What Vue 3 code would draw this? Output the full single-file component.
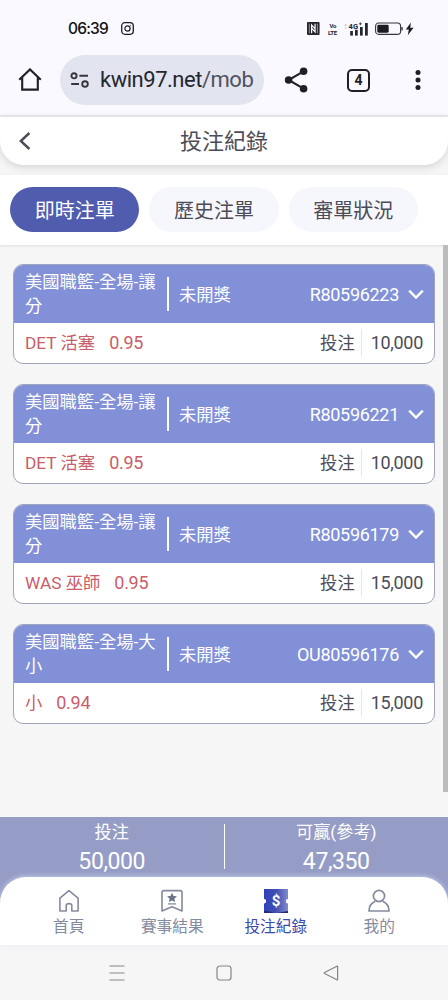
<script setup>
import { ref } from 'vue'

const tabs = ['即時注單', '歷史注單', '審單狀況']
const activeTab = ref(0)

const bets = ref([
  { id: 'R80596223', title: '美國職籃-全場-讓分', team: 'DET 活塞', odds: '0.95', amount: '10,000' },
  { id: 'R80596221', title: '美國職籃-全場-讓分', team: 'DET 活塞', odds: '0.95', amount: '10,000' },
  { id: 'R80596179', title: '美國職籃-全場-讓分', team: 'WAS 巫師', odds: '0.95', amount: '15,000' },
  { id: 'OU80596176', title: '美國職籃-全場-大小', team: '小', odds: '0.94', amount: '15,000' },
])
</script>

<template>
  <div class="phone">
    <div class="status">
      <span class="time">06:39</span>
      <svg class="insta" width="13" height="13" viewBox="0 0 13 13" fill="none" stroke="#1d1d24">
        <rect x=".7" y=".7" width="11.6" height="11.6" rx="3.2" stroke-width="1.3" />
        <circle cx="6.5" cy="6.5" r="2.6" stroke-width="1.2" />
        <circle cx="9.7" cy="3.3" r=".5" fill="#1d1d24" stroke="none" />
      </svg>
      <div class="statusIcons">
        <svg class="nfc" width="13" height="13" viewBox="0 0 13 13">
          <rect width="12.6" height="13" rx="1" fill="#26262c" />
          <path d="M4.6 11.2V3L7.9 6.6M8.1 1.8V10L4.8 6.4" fill="none" stroke="#faf9ff" stroke-width="1.2" />
          <path d="M2.3 1.6V11.4M10.4 1.6V11.4" fill="none" stroke="#faf9ff" stroke-width=".5" />
        </svg>
        <svg class="volte" width="10" height="16" viewBox="0 0 10 16" fill="#26262c">
          <text x="1.4" y="6.6">Vo</text>
          <text x="0" y="14">LTE</text>
        </svg>
        <svg class="signal" width="25" height="14" viewBox="0 0 25 14" fill="#26262c">
          <path d="M0 4L1.7 1.8L3.4 4ZM0 5.4H3.4L1.7 7Z" fill="#cfced6" />
          <text x="4.6" y="6.6">4G</text>
          <path d="M15 1.8h2.8M16.4 .4v2.8" stroke="#26262c" stroke-width=".8" />
          <rect x="6.2" y="9" width="2.7" height="4.6" />
          <rect x="11" y="7.8" width="2.7" height="5.8" />
          <rect x="16" y="5" width="2.7" height="8.6" />
          <rect x="21" y="1" width="2.8" height="12.6" />
        </svg>
        <svg class="battery" width="40" height="14" viewBox="0 0 40 14">
          <rect x=".6" y="1" width="25" height="11.4" rx="3.2" fill="none" stroke="#36363c" stroke-width="1.1" />
          <rect x="2.3" y="2.7" width="11.4" height="8" rx="1.4" fill="#1c1c22" />
          <path d="M27 5v3.6" stroke="#36363c" stroke-width="1.4" />
          <path d="M36 .4L30.8 7.6H33.8L32.8 13.2L38.6 5.8H35.2Z" fill="#1c1c22" />
        </svg>
      </div>
    </div>

    <div class="browser">
      <svg class="home" width="24" height="24" viewBox="0 0 24 24" fill="none" stroke="#202026" stroke-width="2.1">
        <path d="M1.2 11.8L12 1.4L22.8 11.8M4.2 9.4V21.6H19.8V9.4" />
      </svg>
      <div class="address">
        <svg width="20" height="16" viewBox="0 0 20 16" fill="none" stroke="#34353d" stroke-width="1.9">
          <circle cx="4" cy="3.8" r="2.6" />
          <path d="M9.4 3.8H18M1.2 12H9" />
          <circle cx="15" cy="12" r="2.8" />
        </svg>
        <span class="url">kwin97.net<i>/mob</i></span>
      </div>
      <svg class="share" width="24" height="26" viewBox="0 0 24 26" fill="#1f1f26">
        <path d="M19.6 4.3L4.6 13L19.6 21.7" fill="none" stroke="#1f1f26" stroke-width="2.1" />
        <circle cx="4.6" cy="13" r="3.8" />
        <circle cx="19.6" cy="4.3" r="3.8" />
        <circle cx="19.6" cy="21.7" r="3.8" />
      </svg>
      <span class="tabCount">4</span>
      <svg class="dots" width="6" height="20" viewBox="0 0 6 20" fill="#1f1f26">
        <circle cx="3" cy="2.6" r="2.5" />
        <circle cx="3" cy="10" r="2.5" />
        <circle cx="3" cy="17.4" r="2.5" />
      </svg>
    </div>

    <header>
      <svg width="12" height="18" viewBox="0 0 12 18" fill="none" stroke="#4c4c58" stroke-width="2.4">
        <path d="M10.4 1L1.8 9L10.4 17" />
      </svg>
      <h1>投注紀錄</h1>
    </header>

    <nav class="tabs">
      <button
        v-for="(tab, index) in tabs"
        :key="tab"
        :class="{ active: index === activeTab }"
        @click="activeTab = index"
      >{{ tab }}</button>
    </nav>

    <main>
      <section class="list">
        <article v-for="bet in bets" :key="bet.id" class="card">
          <div class="cardTop">
            <p class="title">{{ bet.title }}</p>
            <span class="state">未開獎</span>
            <span class="number">{{ bet.id }}</span>
            <svg width="16" height="11" viewBox="0 0 16 11" fill="none" stroke="#fff" stroke-width="2.3">
              <path d="M1.2 1.6L8 8.6L14.8 1.6" />
            </svg>
          </div>
          <div class="cardBottom">
            <span class="team">{{ bet.team }}</span>
            <span class="odds">{{ bet.odds }}</span>
            <span class="label">投注</span>
            <span class="amount">{{ bet.amount }}</span>
          </div>
        </article>
      </section>
      <div class="scrollbar"></div>
    </main>

    <section class="summary">
      <div class="total">
        <p>投注</p>
        <strong>50,000</strong>
      </div>
      <div class="total">
        <p>可贏(參考)</p>
        <strong>47,350</strong>
      </div>
    </section>

    <footer>
      <a>
        <svg width="24" height="24" viewBox="0 0 24 24" fill="none" stroke="#858b9f" stroke-width="1.6" stroke-linejoin="round">
          <path d="M2.9 9.2L12 1.6L21.1 9.2V22H14.8V16.4Q14.8 14.6 12 14.6Q9.2 14.6 9.2 16.4V22H2.9Z" />
        </svg>
        <span>首頁</span>
      </a>
      <a>
        <svg width="24" height="24" viewBox="0 0 24 24" fill="none" stroke="#858b9f" stroke-width="1.6" stroke-linejoin="round">
          <path d="M3.8 1.6H20.2Q22 1.6 22 3.4V22L12 17.8L2 22V3.4Q2 1.6 3.8 1.6Z" />
          <path d="M12 3.8l1.5 3.1 3.4.4-2.5 2.4.7 3.4-3.1-1.6-3.1 1.6.7-3.4-2.5-2.4 3.4-.4z" fill="#6c7389" stroke="none" />
          <path d="M8 14.9H16" stroke-width="1.3" />
        </svg>
        <span>賽事結果</span>
      </a>
      <a class="current">
        <svg width="24" height="24" viewBox="0 0 24 24">
          <defs>
            <linearGradient id="ticket" x1="0" y1="0" x2="1" y2="0">
              <stop offset="0" stop-color="#2f43ba" />
              <stop offset=".5" stop-color="#424fb2" />
              <stop offset="1" stop-color="#8189cd" />
            </linearGradient>
          </defs>
          <path d="M0 0H24V10A2.2 2.2 0 0 0 24 14.4V24H0V14.4A2.2 2.2 0 0 0 0 10Z" fill="url(#ticket)" />
          <path d="M0 24V21.4Q6 22 10 24ZM24 24V22L13 24Z" fill="#242b72" />
          <text x="12" y="17.2" text-anchor="middle">$</text>
        </svg>
        <span>投注紀錄</span>
      </a>
      <a>
        <svg width="24" height="24" viewBox="0 0 24 24" fill="none" stroke="#858b9f" stroke-width="1.7" stroke-linejoin="round">
          <circle cx="12" cy="7" r="5.6" />
          <path d="M8.4 12.3Q2 15 2 22H22Q22 15 15.6 12.3" />
        </svg>
        <span>我的</span>
      </a>
    </footer>

    <div class="system">
      <svg width="16" height="16" viewBox="0 0 16 16" fill="none" stroke="#85858a" stroke-width="1.2">
        <path d="M.5 1H15.5M.5 8H15.5M.5 15H15.5" />
      </svg>
      <svg width="16" height="16" viewBox="0 0 16 16" fill="none" stroke="#85858a" stroke-width="1.2">
        <rect x="1" y="1" width="14" height="14" rx="2.8" />
      </svg>
      <svg width="16" height="16" viewBox="0 0 16 16" fill="none" stroke="#85858a" stroke-width="1.2" stroke-linejoin="round">
        <path d="M14.6 1.6V14.4Q14.6 15.2 13.8 14.8L1.6 8.5Q.8 8 1.6 7.5L13.8 1.2Q14.6.8 14.6 1.6Z" />
      </svg>
    </div>
  </div>
</template>

<style>
body {
  margin: 0;
}
</style>

<style scoped>
.phone {
  display: flex;
  flex-direction: column;
  width: 448px;
  height: 1000px;
  overflow: hidden;
  background: #f6f6f7;
  color: #4c4c58;
  font-family: Roboto, "Noto Sans CJK TC", sans-serif;
}
.phone * {
  box-sizing: border-box;
}
h1,
p {
  margin: 0;
  font-weight: 400;
}
svg {
  display: block;
  flex: none;
}

/* status bar */
.status {
  display: flex;
  align-items: center;
  flex: none;
  height: 46px;
  padding: 11px 33px 0 68px;
  background: #faf9ff;
}
.time {
  width: 40px;
  color: #111116;
  font: 500 15.5px/20px Inter, sans-serif;
  letter-spacing: -0.8px;
}
.insta {
  margin-left: 13px;
}
.statusIcons {
  display: flex;
  align-items: center;
  margin-left: auto;
}
.volte {
  margin: 0 6px 0 8px;
  overflow: visible;
}
.volte text {
  font: 700 6px Roboto, sans-serif;
  letter-spacing: -0.3px;
}
.signal text {
  font: 700 7.5px Roboto, sans-serif;
}
.battery {
  margin-left: 6px;
}

/* browser bar */
.browser {
  display: flex;
  align-items: center;
  flex: none;
  height: 71px;
  padding: 0 27px 1px 18px;
  border-bottom: 2px solid #eaeaf0;
  background: #faf9ff;
}
.address {
  display: flex;
  align-items: center;
  flex: none;
  width: 204px;
  height: 50px;
  margin: 0 20px 0 18px;
  padding-left: 10px;
  border-radius: 25px;
  background: #e2e4ef;
}
.url {
  margin-left: 10px;
  font-size: 22px;
  line-height: 28px;
  letter-spacing: -0.48px;
  color: #25262e;
}
.url i {
  font-style: normal;
  color: #50525e;
}
.tabCount {
  flex: none;
  width: 23px;
  height: 23px;
  margin-left: 39px;
  border: 2.4px solid #1f1f26;
  border-radius: 5px;
  font-size: 14px;
  font-weight: 700;
  line-height: 19px;
  text-align: center;
  color: #1f1f26;
}
.dots {
  margin-left: auto;
}

/* page title */
header {
  display: grid;
  grid-template-columns: 32px 1fr 32px;
  align-items: center;
  flex: none;
  height: 48px;
  padding: 0 19px;
  border-radius: 0 0 24px 24px;
  background: #fff;
  box-shadow: 0 2px 8px rgba(0, 0, 0, 0.14);
}
h1 {
  padding-top: 2px;
  font-size: 22px;
  line-height: 30px;
  text-align: center;
}

/* tabs */
.tabs {
  display: flex;
  gap: 10px;
  flex: none;
  height: 70px;
  margin-top: 10px;
  padding: 12px 10px;
  background: #fff;
  box-shadow: 0 1px 3px rgba(0, 0, 0, 0.09);
}
.tabs button {
  width: 129.3px;
  height: 45px;
  padding: 0;
  border: 0;
  border-radius: 23px;
  background: #f6f7fc;
  color: #4c4c58;
  font-family: inherit;
  font-size: 20px;
}
.tabs button.active {
  background: #505cae;
  color: #fff;
}

/* bet list */
main {
  display: flex;
  flex: none;
  height: 572px;
}
.list {
  display: flex;
  flex-direction: column;
  gap: 20px;
  flex: 1;
  padding: 19px 8px 0 13px;
}
.scrollbar {
  width: 5px;
  height: 547px;
  background: #bcbcbc;
}
.card {
  flex: none;
  height: 100px;
  border: 1.5px solid #a0a3bd;
  border-radius: 10px;
  background: #fff;
  overflow: hidden;
}
.cardTop {
  display: flex;
  align-items: center;
  height: 58px;
  padding: 0 10px 0 11px;
  background: #8190d7;
  color: #fff;
  font-size: 17.3px;
}
.title {
  display: flex;
  align-items: center;
  width: 144px;
  height: 34px;
  padding-right: 8px;
  border-right: 2.5px solid #fff;
  line-height: 24px;
}
.state {
  margin: -2px 0 0 10px;
}
.number {
  margin: 0 9px 0 auto;
  font-size: 18px;
  letter-spacing: -0.3px;
}
.cardBottom {
  display: flex;
  align-items: center;
  height: 40px;
  padding: 0 11px;
  font-size: 17.3px;
}
.team,
.odds {
  color: #ca5d6a;
}
.team,
.label {
  margin-top: -3px;
}
.odds {
  margin: -1px 0 0 14px;
}
.odds,
.amount {
  font-size: 18px;
  letter-spacing: -0.3px;
}
.label {
  margin-left: auto;
}
.amount {
  height: 28px;
  margin-left: 6px;
  padding-left: 9px;
  border-left: 1px solid #e6e6ec;
  line-height: 28px;
}

/* totals, the rounded footer overlaps the lower edge */
.summary {
  display: flex;
  flex: none;
  height: 90px;
  margin-bottom: -30px;
  padding-top: 7px;
  background: #959dc6;
  color: #fff;
}
.total {
  flex: 1;
  height: 45px;
  text-align: center;
}
.total:first-child {
  border-right: 1px solid #fff;
}
.total p {
  margin-top: -5px;
  font-size: 17.2px;
  line-height: 26px;
}
.total strong {
  display: block;
  font-size: 23px;
  font-weight: 400;
  line-height: 33px;
  letter-spacing: -0.4px;
}

/* bottom navigation */
footer {
  position: relative;
  display: flex;
  flex: none;
  height: 68px;
  padding: 12px 17px 0;
  border-radius: 26px 26px 0 0;
  background: #fff;
  box-shadow: 0 -1px 5px rgba(214, 218, 245, 0.7);
}
footer a {
  display: flex;
  flex-direction: column;
  align-items: center;
  flex: 1;
  color: #858b9f;
  font-size: 15.7px;
  line-height: 24px;
  white-space: nowrap;
}
footer a.current {
  color: #3c4aac;
}
footer a span {
  margin-top: 2px;
}
.current text {
  font: 700 15px Roboto, sans-serif;
  fill: #fff;
}

/* android buttons */
.system {
  display: flex;
  justify-content: center;
  align-items: center;
  gap: 91px;
  flex: none;
  height: 55px;
  background: #f6f6f7;
}
</style>
